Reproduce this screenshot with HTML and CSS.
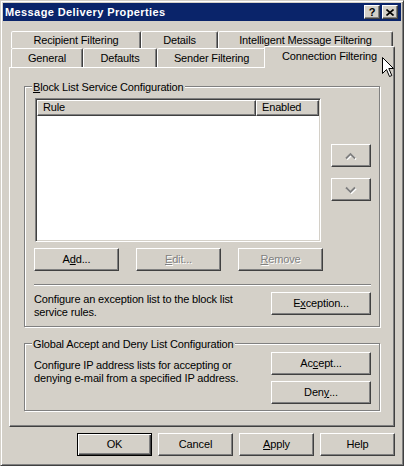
FILE: index.html
```html
<!DOCTYPE html>
<html>
<head>
<meta charset="utf-8">
<title>Message Delivery Properties</title>
<link rel="stylesheet" href="styles.css">
</head>
<body>
<div class="window">
  <div class="titlebar">
    <span class="title">Message Delivery Properties</span>
    <div class="caption-buttons">
      <span class="cap-btn cap-help">?</span>
      <span class="cap-btn cap-close"><svg width="8" height="7" viewBox="0 0 8 7"><path d="M0.5 0.5 L7.5 6.5 M7.5 0.5 L0.5 6.5" stroke="#000" stroke-width="1.6" fill="none"/></svg></span>
    </div>
  </div>
  <div class="client">
    <div class="tabstrip">
      <div class="tabrow row1">
        <div class="tab tab-recipient">Recipient Filtering</div>
        <div class="tab tab-details">Details</div>
        <div class="tab tab-imf">Intelligent Message Filtering</div>
      </div>
      <div class="tabrow row2">
        <div class="tab tab-general">General</div>
        <div class="tab tab-defaults">Defaults</div>
        <div class="tab tab-sender">Sender Filtering</div>
        <div class="tab tab-active">Connection Filtering</div>
      </div>
    </div>
    <div class="panel">
      <div class="group group-block">
        <span class="group-title"><u>B</u>lock List Service Configuration</span>
        <div class="list-area">
          <div class="listview">
            <div class="lv-header">
              <div class="lv-col col-rule">Rule</div>
              <div class="lv-col col-enabled">Enabled</div>
            </div>
          </div>
          <div class="order-buttons">
            <button class="btn btn-order"><svg width="14" height="8" viewBox="0 0 14 8"><polyline points="2,6.5 6.5,2 11,6.5" fill="none" stroke="#fff" stroke-width="1.8" transform="translate(1,1)"/><polyline points="2,6.5 6.5,2 11,6.5" fill="none" stroke="#808080" stroke-width="1.8"/></svg></button>
            <button class="btn btn-order"><svg width="14" height="8" viewBox="0 0 14 8"><polyline points="2,1.5 6.5,6 11,1.5" fill="none" stroke="#fff" stroke-width="1.8" transform="translate(1,1)"/><polyline points="2,1.5 6.5,6 11,1.5" fill="none" stroke="#808080" stroke-width="1.8"/></svg></button>
          </div>
        </div>
        <div class="rule-buttons">
          <button class="btn btn-rule">A<u>d</u>d...</button>
          <button class="btn btn-rule disabled"><u>E</u>dit...</button>
          <button class="btn btn-rule disabled"><u>R</u>emove</button>
        </div>
        <div class="separator"></div>
        <div class="desc-row">
          <div class="desc">Configure an exception list to the block list<br>service rules.</div>
          <button class="btn btn-wide">E<u>x</u>ception...</button>
        </div>
      </div>
      <div class="group group-global">
        <span class="group-title">Global Accept and Deny List Configuration</span>
        <div class="global-row">
          <div class="desc desc-global">Configure IP address lists for accepting or<br>denying e-mail from a specified IP address.</div>
          <div class="global-buttons">
            <button class="btn btn-wide">Ac<u>c</u>ept...</button>
            <button class="btn btn-wide">Den<u>y</u>...</button>
          </div>
        </div>
      </div>
    </div>
    <div class="dialog-buttons">
      <button class="btn btn-dialog btn-default">OK</button>
      <button class="btn btn-dialog">Cancel</button>
      <button class="btn btn-dialog"><u>A</u>pply</button>
      <button class="btn btn-dialog">Help</button>
    </div>
  </div>
  <svg class="cursor" width="13" height="20" viewBox="0 0 13 20"><path d="M0.5 0.5 L0.5 16.5 L4.5 12.5 L7.5 19.5 L9.8 18.5 L6.8 11.5 L11.5 11.5 Z" fill="#fff" stroke="#000" stroke-width="1" stroke-linejoin="miter"/></svg>
</div>
</body>
</html>
```

FILE: styles.css
```css
html, body {
  margin: 0;
  padding: 0;
  background: #d4d0c8;
}

body {
  font-family: "Liberation Sans", Arial, sans-serif;
  font-size: 11px;
  line-height: 13px;
  letter-spacing: -0.15px;
  color: #000;
}

.window {
  position: relative;
  width: 404px;
  height: 466px;
  box-sizing: border-box;
  background: #d4d0c8;
  border: 1px solid;
  border-color: #d4d0c8 #404040 #404040 #d4d0c8;
  box-shadow: inset 1px 1px 0 #fff, inset -1px -1px 0 #808080;
  padding: 2px;
  overflow: hidden;
}

/* title bar */
.titlebar {
  height: 18px;
  background: #0a246a;
  color: #fff;
  display: flex;
  align-items: center;
  padding: 0 3px 0 2px;
}

.title {
  flex: 1;
  font-weight: bold;
  letter-spacing: 0.4px;
  line-height: 18px;
  white-space: nowrap;
}

.caption-buttons {
  display: flex;
  gap: 2px;
}

.cap-btn {
  width: 16px;
  height: 14px;
  box-sizing: border-box;
  background: #d4d0c8;
  border: 1px solid;
  border-color: #fff #404040 #404040 #fff;
  box-shadow: inset -1px -1px 0 #808080;
  display: flex;
  align-items: center;
  justify-content: center;
  color: #000;
  font-weight: bold;
  font-size: 11px;
  line-height: 12px;
  letter-spacing: 0;
}

.cap-close svg {
  display: block;
}

/* client area */
.client {
  padding: 10px 6px 0 6px;
}

.tabstrip {
  padding-left: 2px;
}

.tabrow {
  display: flex;
  align-items: flex-start;
}

.row1 {
  height: 17px;
}

.row2 {
  height: 19px;
}

.tab {
  box-sizing: border-box;
  height: 100%;
  border: 1px solid;
  border-bottom: none;
  border-color: #fff #404040 transparent #fff;
  border-radius: 2px 2px 0 0;
  box-shadow: inset -1px 0 0 #808080;
  background: #d4d0c8;
  text-align: center;
  white-space: nowrap;
  padding-top: 3px;
}

.row1 .tab {
  padding-top: 2px;
}

.tab-recipient { width: 130px; }
.tab-details { width: 77px; }
.tab-imf { width: 175px; }

.tab-general { width: 72px; }
.tab-defaults { width: 74px; }
.tab-sender { width: 109px; }

.tab-active {
  position: relative;
  z-index: 1;
  width: 131px;
  height: 22px;
  margin-left: -2px;
  margin-top: -2px;
}

/* panel */
.panel {
  height: 360px;
  box-sizing: border-box;
  border: 1px solid;
  border-color: #fff #404040 #404040 #fff;
  box-shadow: inset -1px -1px 0 #808080;
  padding: 18px 14px 0 14px;
}

.group {
  position: relative;
  box-sizing: border-box;
  border: 1px solid #808080;
  box-shadow: 1px 1px 0 #fff, inset 1px 1px 0 #fff;
}

.group-title {
  position: absolute;
  top: -6px;
  left: 7px;
  padding: 0 1px;
  background: #d4d0c8;
  white-space: nowrap;
}

.group-block {
  height: 241px;
  padding: 11px 8px 0 9px;
}

.list-area {
  display: flex;
  align-items: flex-start;
}

.listview {
  margin-left: 1px;
  width: 286px;
  height: 144px;
  box-sizing: border-box;
  border: 1px solid;
  border-color: #808080 #fff #fff #808080;
  box-shadow: inset 1px 1px 0 #404040, inset -1px -1px 0 #d4d0c8;
  padding: 1px;
  background: #fff;
}

.lv-header {
  display: flex;
  height: 16px;
}

.lv-col {
  box-sizing: border-box;
  height: 16px;
  border: 1px solid;
  border-color: #fff #404040 #404040 #fff;
  box-shadow: inset -1px -1px 0 #808080;
  background: #d4d0c8;
  padding-left: 5px;
  line-height: 13px;
  white-space: nowrap;
}

.col-rule { width: 219px; }
.col-enabled { width: 63px; }

.order-buttons {
  display: flex;
  flex-direction: column;
  gap: 11px;
  margin-left: 10px;
  padding-top: 46px;
}

.btn {
  box-sizing: border-box;
  height: 23px;
  margin: 0;
  padding: 0;
  border: 1px solid;
  border-color: #fff #404040 #404040 #fff;
  border-radius: 0;
  box-shadow: inset -1px -1px 0 #808080;
  background: #d4d0c8;
  font: inherit;
  letter-spacing: inherit;
  line-height: 13px;
  color: #000;
  display: flex;
  align-items: center;
  justify-content: center;
  white-space: nowrap;
}

.btn svg {
  display: block;
}

.btn-order {
  width: 40px;
}

.rule-buttons {
  display: flex;
  gap: 17px;
  margin-top: 6px;
}

.btn-rule {
  width: 85px;
}

.disabled {
  color: #808080;
  text-shadow: 1px 1px 0 #fff;
}

.separator {
  margin-top: 13px;
  border-top: 1px solid #808080;
  border-bottom: 1px solid #fff;
}

.desc-row {
  display: flex;
  justify-content: space-between;
  align-items: flex-start;
  margin-top: 6px;
}

.desc {
  padding-top: 1px;
  white-space: nowrap;
}

.btn-wide {
  width: 100px;
}

.group-global {
  height: 68px;
  margin-top: 16px;
  padding: 8px 8px 0 9px;
}

.global-row {
  display: flex;
  justify-content: space-between;
  align-items: flex-start;
}

.desc-global {
  padding-top: 7px;
}

.global-buttons {
  display: flex;
  flex-direction: column;
  gap: 6px;
}

.dialog-buttons {
  display: flex;
  justify-content: flex-end;
  gap: 6px;
  margin-top: 6px;
}

.btn-dialog {
  width: 75px;
}

.btn-default {
  border-color: #000;
  box-shadow: inset 1px 1px 0 #fff, inset -1px -1px 0 #404040, inset -2px -2px 0 #808080;
}

.cursor {
  position: absolute;
  left: 381px;
  top: 56px;
  z-index: 5;
}
```
